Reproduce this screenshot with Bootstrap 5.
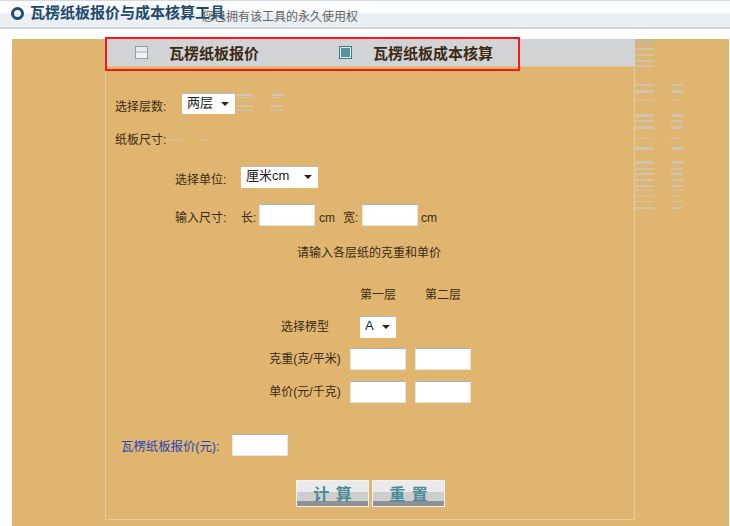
<!DOCTYPE html>
<html lang="zh-CN">
<head>
<meta charset="utf-8">
<title>瓦楞纸板报价与成本核算工具</title>
<link rel="stylesheet" href="https://cdn.jsdelivr.net/npm/bootstrap@5.3.0/dist/css/bootstrap.min.css">
<style>
html,body{height:526px;overflow:hidden}
body{background:#fff;font-family:"Liberation Sans","Noto Sans CJK SC",sans-serif;font-size:12px;color:#3a2a15;line-height:1}
.top-strip{height:29px;border-top:1px solid #d3d9dc;border-bottom:2px solid #ced6d9;background:linear-gradient(#fbfcfd 0 12px,#e8eef1 13px,#e9eff2 100%);padding-left:11px}
.ring{width:13px;height:13px;border:3px solid #1c4a72;border-radius:50%;margin-top:6px;flex:none}
.app-title{font-size:15px;font-weight:700;color:#1f4a6e;margin-left:6px;margin-top:2px;white-space:nowrap;font-family:"Noto Sans CJK SC",sans-serif;line-height:18px}
.app-sub{font-size:12px;color:#666;margin-left:-23px;margin-top:9px;white-space:nowrap;line-height:14px}
.sheet{margin:10px 1px 0 12px;height:487px;background:#e0b570;padding-left:93px}
.inner{width:530px;height:481px;border:solid #e7cb9b;border-width:0 1px 1px 1px;position:relative}
.tabbar{height:27px;background:#d2d3d5;border-bottom:1px solid #e3c48f;margin:0 -1px;padding-left:30px;box-sizing:content-box}
.tab-check{width:13px;height:13px;border:1px solid #8aa2a8;background:linear-gradient(#e9eaec 0 4px,#c9cdd0 4px 6px,#f1f1f1 6px);flex:none}
.tab-check.on{border:1px solid #3e7c86;background:#56929c;box-shadow:inset 0 0 0 1px #dfe8ea}
.tab-name{font-size:15px;font-weight:700;color:#3d2a14;font-family:"Noto Sans CJK SC",sans-serif;margin-left:21px;width:183px;white-space:nowrap}
.tab-name+.tab-check{margin-left:-13px}
.red-frame{position:absolute;left:-1px;top:-2px;width:415px;height:34px;border:2px solid #fa1616;pointer-events:none}
.ln{display:flex;align-items:center;white-space:nowrap}
.tx{font-size:12px}
.low .tx{padding-top:6px}
.sel{appearance:none;-webkit-appearance:none;display:block;font-family:"Liberation Sans","Noto Sans CJK SC",sans-serif;font-size:13px;color:#222;background:#fff url("data:image/svg+xml,%3Csvg xmlns='http://www.w3.org/2000/svg' width='9' height='5'%3E%3Cpath d='M0 0h8L4 4z' fill='%23332211'/%3E%3C/svg%3E") no-repeat right 5px center;border:0;border-top:1px solid #b3bcc4;border-radius:0;padding:0 0 3px 5px;line-height:18px;flex:none}
.sel:focus{outline:0;box-shadow:none}
.fld{display:block;width:56px;height:22px;flex:none;background:#fff;border:1px solid #e8e4da;border-top:1px solid #a9afb6;border-radius:0;padding:0}
.r1{margin-top:26px;padding-left:9px;height:21px}
.r2{margin-top:15px;padding-left:9px;height:21px}
.r3{margin-top:16px;padding-left:69px;height:22px}
.r4{margin-top:16px;padding-left:69px;height:22px}
.r5{margin-top:16px;padding-left:191px;height:20px;padding-top:1px}
.w67{width:67px}.w66{width:66px}
.ghost{flex:none;display:block}
.gridish{margin-top:23px;margin-left:158px;display:grid;grid-template-columns:86px 56px 9px 56px;grid-template-rows:20px 22px 22px 22px;row-gap:10.5px;align-items:center;justify-items:center}
.gridish>.lb{grid-column:1;padding-right:4px;white-space:nowrap}
.c2{grid-column:2}.c3{grid-column:4}
.res{margin-top:31px;padding-left:15px;height:22px}
.res-label{color:#1f44b8;width:111px;font-size:12.4px}
.acts{margin-top:24px;padding-left:190px;gap:3px}
.act{width:73px;height:27px;padding:0;border:0;border-radius:0;color:#4a8c95;font-size:16px;font-weight:700;line-height:27px;word-spacing:3px;font-family:"Noto Sans CJK SC",sans-serif;background:linear-gradient(#eaeaea 0 45%,#cdcecf 45% 78%,#8f9194 78% 100%) 0 0/100% 100%;box-shadow:inset 0 0 0 1px #f2f2f2}
.act:hover{color:#4a8c95;background-color:#ccc}
.side{width:60px;flex:none;margin-left:0}
</style>
</head>
<body>
<header class="top-strip d-flex align-items-start">
  <span class="ring"></span>
  <span class="app-title">瓦楞纸板报价与成本核算工具</span>
  <span class="app-sub">您已拥有该工具的永久使用权</span>
</header>
<main class="sheet d-flex">
  <div class="inner">
    <div class="tabbar d-flex align-items-center">
      <span class="tab-check"></span>
      <span class="tab-name">瓦楞纸板报价</span>
      <span class="tab-check on"></span>
      <span class="tab-name">瓦楞纸板成本核算</span>
    </div>
    <div class="red-frame"></div>

    <div class="ln r1 low">
      <span class="tx w67">选择层数:</span>
      <select class="sel" style="width:53px;height:21px"><option>两层</option></select>
      <svg class="ghost" width="50" height="21" aria-hidden="true"><g fill="#cfc6b4"><rect x="2" y="1" width="16" height="2"/><rect x="36" y="1" width="12" height="2"/><rect x="2" y="4" width="16" height="1"/><rect x="36" y="4" width="12" height="1"/><rect x="2" y="12" width="16" height="2"/><rect x="36" y="12" width="12" height="2"/><rect x="2" y="17" width="16" height="1"/><rect x="36" y="17" width="12" height="1"/></g></svg>
    </div>
    <div class="ln r2">
      <span class="tx">纸板尺寸:</span>
      <svg class="ghost" width="50" height="4" aria-hidden="true"><g fill="#d0c4ac"><rect x="0" y="1" width="16" height="1"/><rect x="34" y="1" width="12" height="1"/></g></svg>
    </div>
    <div class="ln r3 low">
      <span class="tx w66">选择单位:</span>
      <select class="sel" style="width:77px;height:22px"><option>厘米cm</option></select>
    </div>
    <div class="ln r4 low">
      <span class="tx" style="width:66px">输入尺寸:</span>
      <span class="tx" style="width:18px">长:</span>
      <input class="fld" type="text" aria-label="长">
      <span class="tx" style="margin-left:4px;width:24px">cm</span>
      <span class="tx" style="width:19px">宽:</span>
      <input class="fld" type="text" aria-label="宽">
      <span class="tx" style="margin-left:3px">cm</span>
    </div>
    <div class="ln r5"><span class="tx">请输入各层纸的克重和单价</span></div>

    <div class="gridish">
      <span class="c2 tx">第一层</span>
      <span class="c3 tx">第二层</span>
      <span class="lb tx">选择楞型</span>
      <select class="sel c2" style="width:36px;height:22px"><option>A</option></select>
      <span class="lb tx">克重(克/平米)</span>
      <input class="fld c2" type="text" aria-label="第一层克重">
      <input class="fld c3" type="text" aria-label="第二层克重">
      <span class="lb tx">单价(元/千克)</span>
      <input class="fld c2" type="text" aria-label="第一层单价">
      <input class="fld c3" type="text" aria-label="第二层单价">
    </div>

    <div class="ln res low">
      <span class="tx res-label">瓦楞纸板报价(元):</span>
      <input class="fld" type="text" aria-label="报价">
    </div>
    <div class="d-flex acts">
      <button type="button" class="btn act">计 算</button>
      <button type="button" class="btn act">重 置</button>
    </div>
  </div>
  <svg class="side" height="190" aria-hidden="true">
    <g fill="#cfc4ac">
      <rect x="0" y="0" width="19" height="7" fill="#cfb48c"/>
      <rect x="0" y="9" width="19" height="2"/><rect x="0" y="15" width="19" height="2"/><rect x="0" y="21" width="19" height="2"/><rect x="0" y="26" width="19" height="2"/>
      <rect x="0" y="45" width="19" height="2"/><rect x="36" y="45" width="12" height="2"/>
      <rect x="0" y="51" width="19" height="3"/><rect x="36" y="51" width="12" height="3"/>
      <rect x="0" y="61" width="19" height="1"/><rect x="36" y="61" width="12" height="1"/>
      <rect x="0" y="75" width="19" height="3"/><rect x="36" y="75" width="12" height="3"/>
      <rect x="0" y="81" width="19" height="2"/><rect x="36" y="81" width="12" height="2"/>
      <rect x="0" y="87" width="19" height="3"/><rect x="36" y="87" width="12" height="3"/>
      <rect x="0" y="99" width="19" height="1"/><rect x="36" y="99" width="12" height="1"/>
      <rect x="0" y="108" width="19" height="3"/><rect x="36" y="108" width="12" height="3"/>
      <rect x="0" y="122" width="19" height="3"/><rect x="36" y="122" width="12" height="3"/>
      <rect x="0" y="129" width="19" height="2"/><rect x="36" y="129" width="12" height="2"/>
      <rect x="0" y="134" width="19" height="2"/><rect x="36" y="134" width="12" height="2"/>
      <rect x="0" y="140" width="19" height="2"/><rect x="36" y="140" width="12" height="2"/>
      <rect x="0" y="146" width="19" height="2"/><rect x="36" y="146" width="12" height="2"/>
      <rect x="0" y="151" width="19" height="1"/><rect x="36" y="151" width="12" height="1"/>
      <rect x="0" y="156" width="19" height="1"/><rect x="36" y="156" width="12" height="1"/>
      <rect x="0" y="162" width="19" height="1"/><rect x="36" y="162" width="12" height="1"/>
      <rect x="0" y="168" width="19" height="2"/><rect x="36" y="168" width="12" height="2"/>
    </g>
  </svg>
</main>
<script src="https://cdn.jsdelivr.net/npm/bootstrap@5.3.0/dist/js/bootstrap.bundle.min.js"></script>
</body>
</html>
